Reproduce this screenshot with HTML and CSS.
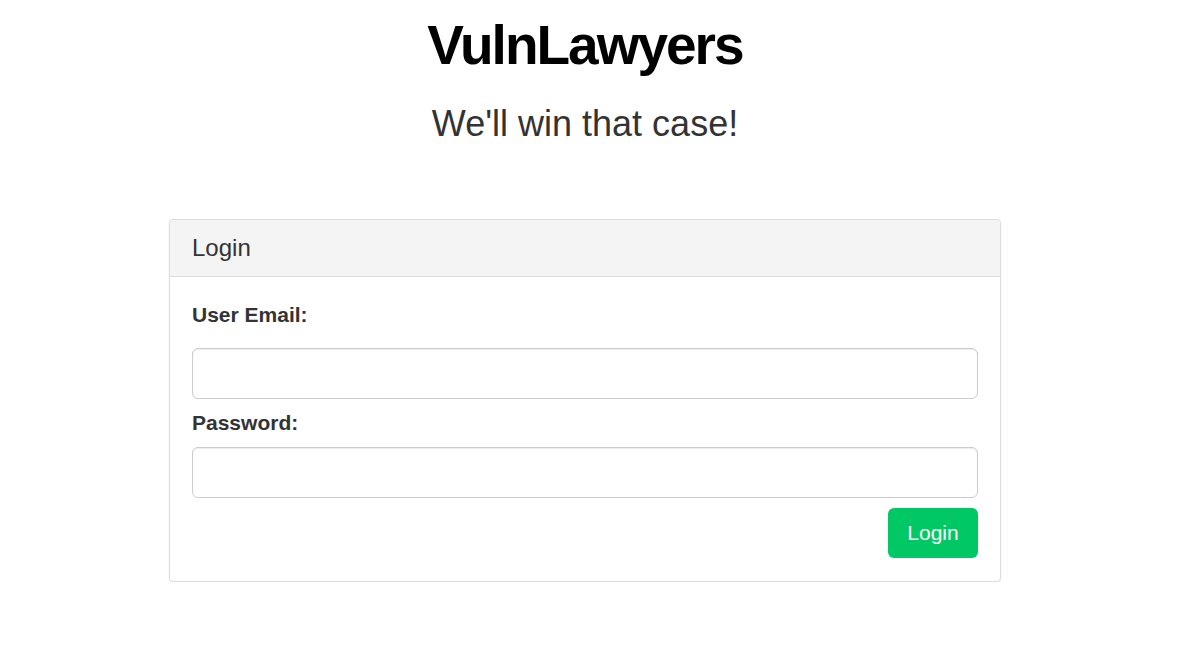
FILE: index.html
```html
<!DOCTYPE html>
<html>
<head>
<meta charset="utf-8">
<link rel="stylesheet" href="styles.css">
</head>
<body>
<div class="page">
  <h1 class="title">VulnLawyers</h1>
  <p class="tagline">We'll win that case!</p>
  <div class="panel">
    <div class="panel-heading">Login</div>
    <div class="panel-body">
      <label class="label label-first">User Email:</label>
      <input class="field" type="text">
      <label class="label">Password:</label>
      <input class="field" type="password">
      <div class="actions">
        <button class="btn">Login</button>
      </div>
    </div>
  </div>
</div>
</body>
</html>
```

FILE: styles.css
```css
html, body {
  margin: 0;
  padding: 0;
  background: #fff;
}
body {
  font-family: "Liberation Sans", Arial, sans-serif;
  color: #333;
}
.page {
  width: 1170px;
  display: flex;
  flex-direction: column;
  align-items: center;
}
.title {
  margin: 14px 0 0;
  font-size: 55px;
  line-height: 62px;
  font-weight: bold;
  letter-spacing: -2px;
  color: #000;
}
.tagline {
  margin: 27px 0 0;
  font-size: 36px;
  line-height: 42px;
  color: #333;
}
.panel {
  margin-top: 74px;
  width: 830px;
  border: 1px solid #ddd;
  border-radius: 4px;
  box-shadow: 0 1px 2px rgba(0,0,0,0.08);
  background: #fff;
}
.panel-heading {
  background: #f4f4f4;
  border-bottom: 1px solid #ddd;
  border-radius: 4px 4px 0 0;
  height: 56px;
  padding: 0 22px;
  font-size: 24px;
  line-height: 56px;
  color: #333;
}
.panel-body {
  padding: 22px 22px 23px;
  display: flex;
  flex-direction: column;
}
.label {
  font-size: 21px;
  font-weight: bold;
  line-height: 28px;
  color: #333;
  margin-bottom: 10px;
}
.label-first {
  margin-top: 2px;
  margin-bottom: 19px;
}
.field {
  box-sizing: border-box;
  height: 51px;
  border: 1px solid #ccc;
  border-radius: 6px;
  box-shadow: inset 0 1px 1px rgba(0,0,0,0.075);
  margin: 0 0 10px;
  font-size: 18px;
  padding: 6px 12px;
}
.actions {
  display: flex;
  justify-content: flex-end;
}
.btn {
  height: 50px;
  width: 90px;
  border: none;
  border-radius: 6px;
  background: #00c864;
  color: #fff;
  font-family: "Liberation Sans", Arial, sans-serif;
  font-size: 21px;
  padding: 0;
}
```
